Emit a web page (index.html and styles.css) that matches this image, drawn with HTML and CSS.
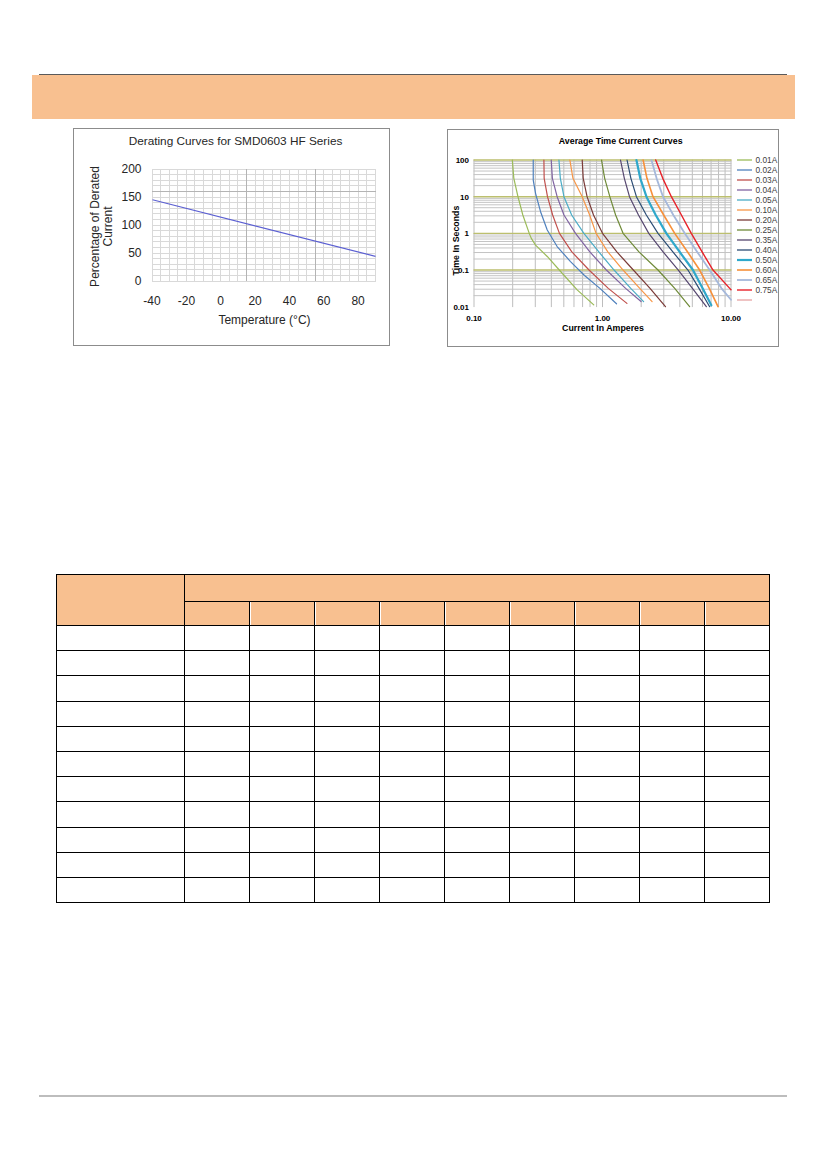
FILE: index.html
```html
<!DOCTYPE html>
<html>
<head>
<meta charset="utf-8">
<link rel="stylesheet" href="styles.css">
</head>
<body>
<div class="page">
  <div class="top-rule"></div>
  <div class="band"></div>

  <div class="charts">
    <div class="chart chart-derating">
      <svg class="svg-fill" width="315" height="216" viewBox="0 0 315 216">
        <text class="dc-title" x="161.5" y="15.5" text-anchor="middle">Derating Curves for SMD0603 HF Series</text>
        <path class="dc-grid" d="M78.5 40V152M86.5 40V152M95.5 40V152M103.5 40V152M112.5 40V152M120.5 40V152M129.5 40V152M138.5 40V152M146.5 40V152M155.5 40V152M163.5 40V152M172.5 40V152M181.5 40V152M189.5 40V152M198.5 40V152M206.5 40V152M215.5 40V152M224.5 40V152M232.5 40V152M241.5 40V152M249.5 40V152M258.5 40V152M266.5 40V152M275.5 40V152M284.5 40V152M292.5 40V152M301.5 40V152M78 40.5H302M78 45.5H302M78 51.5H302M78 56.5H302M78 62.5H302M78 68.5H302M78 73.5H302M78 79.5H302M78 84.5H302M78 90.5H302M78 96.5H302M78 101.5H302M78 107.5H302M78 112.5H302M78 118.5H302M78 124.5H302M78 129.5H302M78 135.5H302M78 140.5H302M78 146.5H302M78 152.5H302"/>
        <path class="dc-major" d="M172.5 40V152M241.5 40V152M78 62.5H302"/>
        <path class="dc-line" d="M78.5 70.8L301.5 127.4"/>
        <g class="dc-tick" text-anchor="end">
          <text x="67.5" y="44.3">200</text>
          <text x="67.5" y="72.3">150</text>
          <text x="67.5" y="100.3">100</text>
          <text x="67.5" y="128.3">50</text>
          <text x="67.5" y="156.3">0</text>
        </g>
        <g class="dc-tick" text-anchor="middle">
          <text x="78" y="175.5">-40</text>
          <text x="112.4" y="175.5">-20</text>
          <text x="146.7" y="175.5">0</text>
          <text x="181.1" y="175.5">20</text>
          <text x="215.4" y="175.5">40</text>
          <text x="249.8" y="175.5">60</text>
          <text x="284.1" y="175.5">80</text>
        </g>
        <text class="dc-tick" x="190.5" y="195" text-anchor="middle">Temperature (°C)</text>
        <text class="dc-tick" transform="translate(24.5,97.5) rotate(-90)" text-anchor="middle">Percentage of Derated</text>
        <text class="dc-tick" transform="translate(38,97.5) rotate(-90)" text-anchor="middle">Current</text>
      </svg>
    </div>

    <div class="chart chart-tcc">
      <svg class="svg-fill" width="330" height="216" viewBox="0 0 330 216">
        <text class="tc-title" x="172.7" y="13.5" text-anchor="middle">Average Time Current Curves</text>
        <svg class="tc-plot" x="26" y="30" width="257" height="146.7" viewBox="0 0 2 4" preserveAspectRatio="none" overflow="visible">
          <path class="tc-gridv" d="M0 0V4M.301 0V4M.477 0V4M.602 0V4M.699 0V4M.778 0V4M.845 0V4M.903 0V4M.954 0V4M1 0V4M1.301 0V4M1.477 0V4M1.602 0V4M1.699 0V4M1.778 0V4M1.845 0V4M1.903 0V4M1.954 0V4M2 0V4"/>
          <path class="tc-gridh" d="M0 .046H2M0 .097H2M0 .155H2M0 .222H2M0 .301H2M0 .398H2M0 .523H2M0 .699H2M0 1.046H2M0 1.097H2M0 1.155H2M0 1.222H2M0 1.301H2M0 1.398H2M0 1.523H2M0 1.699H2M0 2.046H2M0 2.097H2M0 2.155H2M0 2.222H2M0 2.301H2M0 2.398H2M0 2.523H2M0 2.699H2M0 3.046H2M0 3.097H2M0 3.155H2M0 3.222H2M0 3.301H2M0 3.398H2M0 3.523H2M0 3.699H2"/>
          <path class="tc-major" d="M0 0H2M0 1H2M0 2H2M0 3H2"/>
          <path class="c c01" d="M.298 0L.31 .5L.342 1L.38 1.5L.43 2L.445 2.13L.479 2.32L.57 2.63L.674 3.04L.803 3.54L.932 3.95"/>
          <path class="c c02" d="M.461 0L.461 .55L.479 .91L.518 1.41L.57 1.91L.647 2.36L.751 2.77L.86 3.15L.98 3.5L1.109 3.92"/>
          <path class="c c03" d="M.544 0L.546 .5L.572 1L.612 1.5L.665 2L.76 2.5L.895 3L1.045 3.5L1.19 3.91"/>
          <path class="c c04" d="M.601 0L.61 .5L.647 1L.7 1.5L.79 2L.9 2.5L1.03 3L1.18 3.5L1.3 3.86"/>
          <path class="c c05" d="M.661 0L.672 .5L.7 1L.76 1.5L.855 2L.97 2.5L1.09 3L1.22 3.5L1.32 3.86"/>
          <path class="c c10" d="M.746 0L.77 .5L.842 1L.9 1.5L.95 2L1.04 2.5L1.16 3L1.29 3.5L1.386 3.86"/>
          <path class="c c20" d="M.842 0L.85 .5L.88 1L.93 1.5L1 2L1.11 2.5L1.24 3L1.37 3.5L1.49 4"/>
          <path class="c c25" d="M.992 0L1.017 .5L1.057 1L1.102 1.5L1.16 2L1.282 2.5L1.432 3L1.562 3.5L1.678 4"/>
          <path class="c c35" d="M1.14 0L1.17 .5L1.21 1L1.28 1.5L1.36 2L1.47 2.5L1.59 3L1.7 3.5L1.808 4"/>
          <path class="c c40" d="M1.191 0L1.221 .5L1.264 1L1.341 1.5L1.432 2L1.546 2.5L1.665 3L1.751 3.5L1.834 4"/>
          <path class="c c50" d="M1.264 0L1.294 .5L1.342 1L1.414 1.5L1.497 2L1.599 2.5L1.704 3L1.779 3.5L1.847 3.96"/>
          <path class="c c60" d="M1.316 0L1.346 .5L1.393 1L1.476 1.5L1.562 2L1.661 2.5L1.756 3L1.831 3.5L1.899 4"/>
          <path class="c c65" d="M1.381 0L1.421 .5L1.471 1L1.551 1.5L1.64 2L1.736 2.5L1.834 3L1.926 3.5L2 3.81"/>
          <path class="c c75" d="M1.414 0L1.469 .5L1.536 1L1.614 1.5L1.691 2L1.774 2.5L1.86 3L1.99 3.5L2 3.54"/>
        </svg>
        <g class="tc-tick" text-anchor="end">
          <text x="21" y="33">100</text>
          <text x="21" y="69.7">10</text>
          <text x="21" y="106.3">1</text>
          <text x="21" y="143">0.1</text>
          <text x="21" y="179.7">0.01</text>
        </g>
        <g class="tc-tick" text-anchor="middle">
          <text x="26" y="191">0.10</text>
          <text x="154.5" y="191">1.00</text>
          <text x="283" y="191">10.00</text>
        </g>
        <text class="tc-axis" x="155" y="201" text-anchor="middle">Current In Amperes</text>
        <text class="tc-axis" transform="translate(11,110.5) rotate(-90)" text-anchor="middle">Time In Seconds</text>
        <g class="tc-legend">
          <path class="lg c01" d="M289 30H304"/><text x="307.5" y="33">0.01A</text>
          <path class="lg c02" d="M289 40H304"/><text x="307.5" y="43">0.02A</text>
          <path class="lg c03" d="M289 50H304"/><text x="307.5" y="53">0.03A</text>
          <path class="lg c04" d="M289 60H304"/><text x="307.5" y="63">0.04A</text>
          <path class="lg c05" d="M289 70H304"/><text x="307.5" y="73">0.05A</text>
          <path class="lg c10" d="M289 80H304"/><text x="307.5" y="83">0.10A</text>
          <path class="lg c20" d="M289 90H304"/><text x="307.5" y="93">0.20A</text>
          <path class="lg c25" d="M289 100H304"/><text x="307.5" y="103">0.25A</text>
          <path class="lg c35" d="M289 110H304"/><text x="307.5" y="113">0.35A</text>
          <path class="lg c40" d="M289 120H304"/><text x="307.5" y="123">0.40A</text>
          <path class="lg c50" d="M289 130H304"/><text x="307.5" y="133">0.50A</text>
          <path class="lg c60" d="M289 140H304"/><text x="307.5" y="143">0.60A</text>
          <path class="lg c65" d="M289 150H304"/><text x="307.5" y="153">0.65A</text>
          <path class="lg c75" d="M289 160H304"/><text x="307.5" y="163">0.75A</text>
          <path class="lg cxx" d="M289 170H304"/>
        </g>
      </svg>
    </div>
  </div>

  <table class="spec">
    <colgroup>
      <col class="col-first">
      <col class="col-sub"><col class="col-sub"><col class="col-sub"><col class="col-sub"><col class="col-sub"><col class="col-sub"><col class="col-sub"><col class="col-sub"><col class="col-sub">
    </colgroup>
    <tr class="hrow1"><td class="hd" rowspan="2"></td><td class="hd" colspan="9"></td></tr>
    <tr class="hrow2"><td class="hd sub"></td><td class="hd sub"></td><td class="hd sub"></td><td class="hd sub"></td><td class="hd sub"></td><td class="hd sub"></td><td class="hd sub"></td><td class="hd sub"></td><td class="hd sub"></td></tr>
    <tr class="brow"><td></td><td></td><td></td><td></td><td></td><td></td><td></td><td></td><td></td><td></td></tr>
    <tr class="brow"><td></td><td></td><td></td><td></td><td></td><td></td><td></td><td></td><td></td><td></td></tr>
    <tr class="brow"><td></td><td></td><td></td><td></td><td></td><td></td><td></td><td></td><td></td><td></td></tr>
    <tr class="brow"><td></td><td></td><td></td><td></td><td></td><td></td><td></td><td></td><td></td><td></td></tr>
    <tr class="brow"><td></td><td></td><td></td><td></td><td></td><td></td><td></td><td></td><td></td><td></td></tr>
    <tr class="brow"><td></td><td></td><td></td><td></td><td></td><td></td><td></td><td></td><td></td><td></td></tr>
    <tr class="brow"><td></td><td></td><td></td><td></td><td></td><td></td><td></td><td></td><td></td><td></td></tr>
    <tr class="brow"><td></td><td></td><td></td><td></td><td></td><td></td><td></td><td></td><td></td><td></td></tr>
    <tr class="brow"><td></td><td></td><td></td><td></td><td></td><td></td><td></td><td></td><td></td><td></td></tr>
    <tr class="brow"><td></td><td></td><td></td><td></td><td></td><td></td><td></td><td></td><td></td><td></td></tr>
    <tr class="brow"><td></td><td></td><td></td><td></td><td></td><td></td><td></td><td></td><td></td><td></td></tr>
  </table>

  <div class="bottom-rule"></div>
</div>
</body>
</html>
```

FILE: styles.css
```css
html, body {
  margin: 0;
  padding: 0;
  background: #ffffff;
}

body {
  font-family: "Liberation Sans", Arial, sans-serif;
}

.page {
  width: 827px;
  min-height: 1169px;
  overflow: hidden;
}

.top-rule {
  margin: 74px 0 0 39px;
  width: 748px;
  height: 1px;
  background: #5a5a5a;
}

.band {
  margin-left: 32px;
  width: 763px;
  height: 44px;
  background: #f8c090;
}

.charts {
  display: flex;
  align-items: flex-start;
  gap: 57px;
  margin: 9px 0 0 73px;
  height: 219px;
}

.chart {
  border: 1px solid #8c8c8c;
  background: #ffffff;
  height: 216px;
}

.chart-derating {
  width: 315px;
}

.chart-tcc {
  width: 330px;
  margin-top: 1px;
}

.svg-fill {
  display: block;
}

/* Derating chart */
.dc-title {
  font-family: "Liberation Sans", Arial, sans-serif;
  font-size: 11.8px;
  fill: #262626;
}

.dc-tick {
  font-family: "Liberation Sans", Arial, sans-serif;
  font-size: 12px;
  fill: #262626;
}

.dc-grid {
  fill: none;
  stroke: #d9d9d9;
  stroke-width: 1;
}

.dc-major {
  fill: none;
  stroke: #b4b4b4;
  stroke-width: 1;
}

.dc-line {
  fill: none;
  stroke: #5b5fd2;
  stroke-width: 1.1;
}

/* Time current chart */
.tc-title {
  font-family: "Liberation Sans", Arial, sans-serif;
  font-size: 8.8px;
  font-weight: bold;
  fill: #000000;
}

.tc-axis {
  font-family: "Liberation Sans", Arial, sans-serif;
  font-size: 8.8px;
  font-weight: bold;
  fill: #000000;
}

.tc-tick {
  font-family: "Liberation Sans", Arial, sans-serif;
  font-size: 8px;
  font-weight: bold;
  fill: #000000;
}

.tc-plot path {
  fill: none;
  vector-effect: non-scaling-stroke;
  stroke-linejoin: round;
  stroke-linecap: round;
}

.tc-gridv {
  stroke: #bdbdbd;
  stroke-width: 1;
}

.tc-gridh {
  stroke: #c4c4c4;
  stroke-width: 1;
}

.tc-major {
  stroke: #bcbf6e;
  stroke-width: 1.4;
}

.c {
  stroke-width: 1.2;
}

.tc-legend text {
  font-family: "Liberation Sans", Arial, sans-serif;
  font-size: 8.3px;
  fill: #404040;
}

.lg {
  fill: none;
  stroke-width: 1.3;
}

.c01 { stroke: #9bbb59; }
.c02 { stroke: #4f81bd; }
.c03 { stroke: #c0504d; }
.c04 { stroke: #8064a2; }
.c05 { stroke: #4bacc6; }
.c10 { stroke: #f79646; }
.c20 { stroke: #7b3b38; }
.c25 { stroke: #6f8a38; }
.c35 { stroke: #55466f; }
.c40 { stroke: #2c4d75; }
.c50 { stroke: #2fa8cb; stroke-width: 2.2; }
.c60 { stroke: #f7903a; stroke-width: 1.6; }
.c65 { stroke: #a5b8db; stroke-width: 1.8; }
.c75 { stroke: #e8222a; stroke-width: 1.4; }
.cxx { stroke: #e6a3a3; }

/* Table */
.spec {
  border-collapse: collapse;
  table-layout: fixed;
  width: 713px;
  margin: 227px 0 0 56px;
}

.col-first {
  width: 128px;
}

.col-sub {
  width: 65px;
}

.spec td {
  border: 1px solid #000000;
  padding: 0;
}

.spec .hd {
  background: #f8c090;
}

.spec .sub + .sub {
  box-shadow: inset 1px 0 0 #ffffff;
}

.hrow1 {
  height: 27px;
}

.hrow2 {
  height: 24px;
}

.brow {
  height: 25.2px;
}

.bottom-rule {
  margin: 192px 0 0 39px;
  width: 748px;
  height: 2px;
  background: #bdbdbd;
}
```
